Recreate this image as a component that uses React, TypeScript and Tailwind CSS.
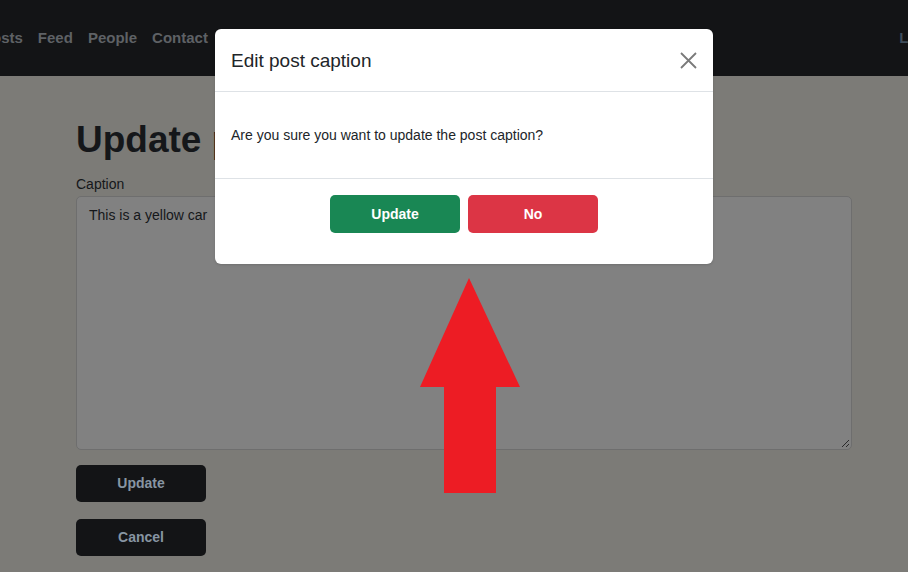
import React from "react";

const font = { fontFamily: '"Liberation Sans", Arial, sans-serif' };

export default function App() {
  return (
    <div className="relative w-[908px] h-[572px] overflow-hidden bg-[#7c7b77]" style={font}>
      {/* Navbar (dimmed by backdrop) */}
      <nav className="h-[76px] bg-[#131416] flex items-center justify-between">
        <div className="flex items-center gap-[15px] -ml-[18px] text-[15px] font-bold text-[#5e6165]">
          <span>Posts</span>
          <span>Feed</span>
          <span>People</span>
          <span>Contact</span>
        </div>
        <div className="text-[15px] font-bold text-[#3f4d5a] translate-x-[42px]">Logout</div>
      </nav>

      {/* Page */}
      <main className="px-[76px] pt-[42px]">
        <h1 className="text-[37px] leading-[44px] font-bold text-[#15171a]">Update post</h1>
        <label className="block mt-[12px] text-[14px] font-medium text-[#15171a]">Caption</label>
        <div className="relative mt-[1px] h-[254px] w-[776px] rounded-[5px] border border-[#6e6e6e] bg-[#818181] px-[12px] py-[8px] text-[14px] font-medium text-[#15171a]">
          This is a yellow car
          <svg className="absolute right-[1px] bottom-[1px]" width="9" height="9" viewBox="0 0 9 9">
            <path d="M8 1 L1 8 M8 5 L5 8" stroke="#2a2a2a" strokeWidth="1" />
          </svg>
        </div>
        <div className="mt-[15px] flex flex-col gap-[17px]">
          <button className="w-[130px] h-[37px] rounded-[5px] bg-[#131416] text-[14px] font-bold text-[#8795a2]">Update</button>
          <button className="w-[130px] h-[37px] rounded-[5px] bg-[#131416] text-[14px] font-bold text-[#8795a2]">Cancel</button>
        </div>
      </main>

      {/* Red arrow annotation */}
      <svg className="absolute left-[419px] top-[277px]" width="102" height="218" viewBox="0 0 102 218">
        <polygon points="50,1 101,110 77,110 77,216 25,216 25,110 1,110" fill="#ed1c24" />
      </svg>

      {/* Modal */}
      <div className="absolute left-[215px] top-[29px] w-[498px] rounded-[6px] bg-white shadow-sm">
        <div className="h-[63px] flex items-center justify-between px-[16px] border-b border-[#dee2e6]">
          <h2 className="text-[19px] font-medium text-[#212529] pt-[2px]">Edit post caption</h2>
          <svg width="17" height="17" viewBox="0 0 17 17">
            <path d="M1 1 L16 16 M16 1 L1 16" stroke="#7a7a7a" strokeWidth="1.8" />
          </svg>
        </div>
        <div className="h-[87px] flex items-center px-[16px] border-b border-[#dee2e6] text-[14px] font-medium text-[#212529]">
          Are you sure you want to update the post caption?
        </div>
        <div className="h-[85px] flex justify-center gap-[8px] pt-[16px]">
          <button className="w-[130px] h-[38px] rounded-[5px] bg-[#198754] text-white text-[14px] font-bold">Update</button>
          <button className="w-[130px] h-[38px] rounded-[5px] bg-[#dc3545] text-white text-[14px] font-bold">No</button>
        </div>
      </div>
    </div>
  );
}
